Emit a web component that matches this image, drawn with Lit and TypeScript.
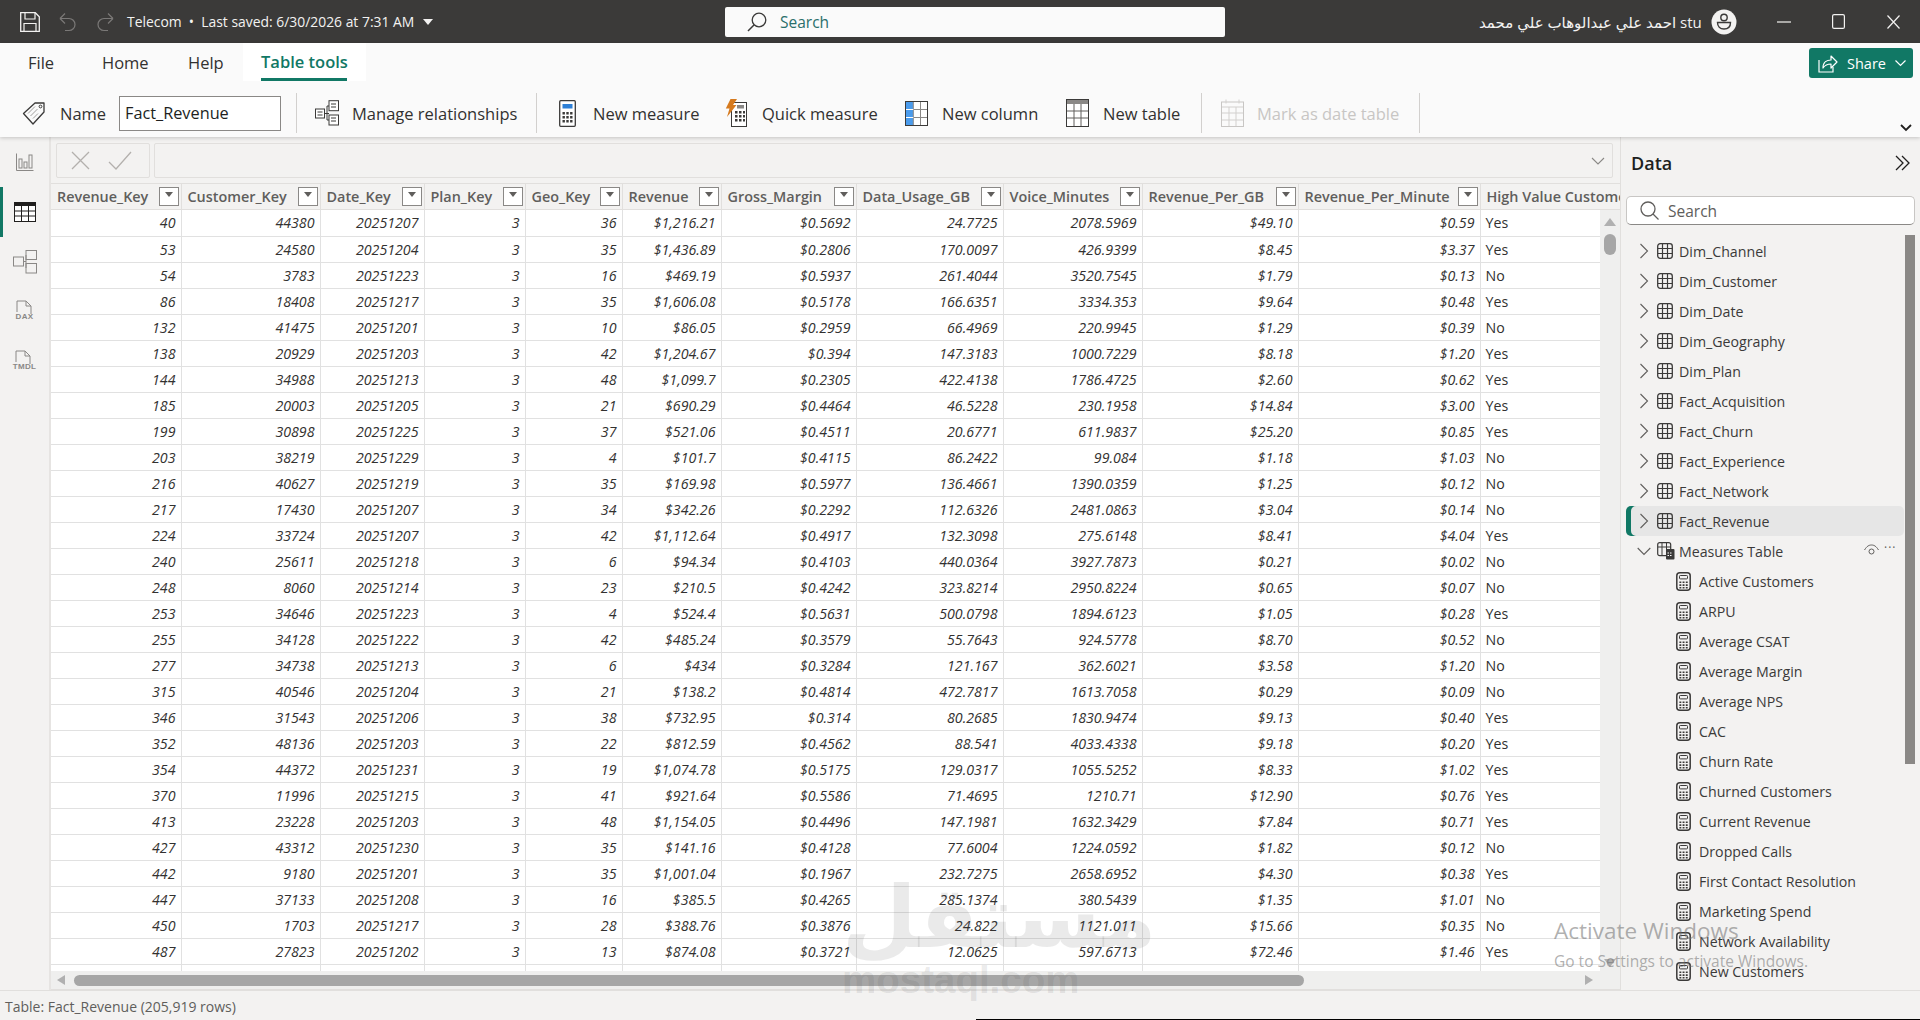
import { LitElement, html, css, svg } from 'lit'
import { customElement } from 'lit/decorators.js'

const COLS = [130, 139, 104, 101, 97, 99, 135, 147, 139, 156, 182, 140]
const HEADERS = ['Revenue_Key', 'Customer_Key', 'Date_Key', 'Plan_Key', 'Geo_Key', 'Revenue', 'Gross_Margin', 'Data_Usage_GB', 'Voice_Minutes', 'Revenue_Per_GB', 'Revenue_Per_Minute', 'High Value Customer']

const ROWS = `40 44380 20251207 3 36 $1,216.21 $0.5692 24.7725 2078.5969 $49.10 $0.59 Yes
53 24580 20251204 3 35 $1,436.89 $0.2806 170.0097 426.9399 $8.45 $3.37 Yes
54 3783 20251223 3 16 $469.19 $0.5937 261.4044 3520.7545 $1.79 $0.13 No
86 18408 20251217 3 35 $1,606.08 $0.5178 166.6351 3334.353 $9.64 $0.48 Yes
132 41475 20251201 3 10 $86.05 $0.2959 66.4969 220.9945 $1.29 $0.39 No
138 20929 20251203 3 42 $1,204.67 $0.394 147.3183 1000.7229 $8.18 $1.20 Yes
144 34988 20251213 3 48 $1,099.7 $0.2305 422.4138 1786.4725 $2.60 $0.62 Yes
185 20003 20251205 3 21 $690.29 $0.4464 46.5228 230.1958 $14.84 $3.00 Yes
199 30898 20251225 3 37 $521.06 $0.4511 20.6771 611.9837 $25.20 $0.85 Yes
203 38219 20251229 3 4 $101.7 $0.4115 86.2422 99.084 $1.18 $1.03 No
216 40627 20251219 3 35 $169.98 $0.5977 136.4661 1390.0359 $1.25 $0.12 No
217 17430 20251207 3 34 $342.26 $0.2292 112.6326 2481.0863 $3.04 $0.14 No
224 33724 20251207 3 42 $1,112.64 $0.4917 132.3098 275.6148 $8.41 $4.04 Yes
240 25611 20251218 3 6 $94.34 $0.4103 440.0364 3927.7873 $0.21 $0.02 No
248 8060 20251214 3 23 $210.5 $0.4242 323.8214 2950.8224 $0.65 $0.07 No
253 34646 20251223 3 4 $524.4 $0.5631 500.0798 1894.6123 $1.05 $0.28 Yes
255 34128 20251222 3 42 $485.24 $0.3579 55.7643 924.5778 $8.70 $0.52 No
277 34738 20251213 3 6 $434 $0.3284 121.167 362.6021 $3.58 $1.20 No
315 40546 20251204 3 21 $138.2 $0.4814 472.7817 1613.7058 $0.29 $0.09 No
346 31543 20251206 3 38 $732.95 $0.314 80.2685 1830.9474 $9.13 $0.40 Yes
352 48136 20251203 3 22 $812.59 $0.4562 88.541 4033.4338 $9.18 $0.20 Yes
354 44372 20251231 3 19 $1,074.78 $0.5175 129.0317 1055.5252 $8.33 $1.02 Yes
370 11996 20251215 3 41 $921.64 $0.5586 71.4695 1210.71 $12.90 $0.76 Yes
413 23228 20251203 3 48 $1,154.05 $0.4496 147.1981 1632.3429 $7.84 $0.71 Yes
427 43312 20251230 3 35 $141.16 $0.4128 77.6004 1224.0592 $1.82 $0.12 No
442 9180 20251201 3 35 $1,001.04 $0.1967 232.7275 2658.6952 $4.30 $0.38 Yes
447 37133 20251208 3 16 $385.5 $0.4265 285.1374 380.5439 $1.35 $1.01 No
450 1703 20251217 3 28 $388.76 $0.3876 24.822 1121.011 $15.66 $0.35 No
487 27823 20251202 3 13 $874.08 $0.3721 12.0625 597.6713 $72.46 $1.46 Yes`.split('\n').map(r => r.split(' '))

const TABLES = ['Dim_Channel', 'Dim_Customer', 'Dim_Date', 'Dim_Geography', 'Dim_Plan', 'Fact_Acquisition', 'Fact_Churn', 'Fact_Experience', 'Fact_Network', 'Fact_Revenue']
const MEASURES = ['Active Customers', 'ARPU', 'Average CSAT', 'Average Margin', 'Average NPS', 'CAC', 'Churn Rate', 'Churned Customers', 'Current Revenue', 'Dropped Calls', 'First Contact Resolution', 'Marketing Spend', 'Network Availability', 'New Customers']

const icon = (w: number, h: number, body: unknown) => html`<svg width=${w} height=${h} viewBox="0 0 ${w} ${h}" fill="none">${body}</svg>`

const gridIcon = () => icon(16, 16, svg`<rect x=".7" y=".7" width="14.6" height="14.6" rx="2.5" stroke="#3b3a39" stroke-width="1.3"/><path d="M5.5 1v14M10.5 1v14M1 5.5h14M1 10.5h14" stroke="#3b3a39" stroke-width="1.2"/>`)
const calcIcon = () => icon(15, 19, svg`<rect x=".8" y=".8" width="13.4" height="17.4" rx="3" stroke="#3b3a39" stroke-width="1.5"/><rect x="3.5" y="3.5" width="8" height="3.4" rx=".8" stroke="#3b3a39"/><path d="M3.4 9.500h1.900v1.600H3.400zM6.600 9.500h1.900v1.600H6.600zM9.800 9.500h1.900v1.600H9.800zM3.400 12.300h1.900v1.600H3.400zM6.600 12.300h1.900v1.600H6.600zM9.800 12.300h1.900v1.600H9.800zM3.400 15h1.900v1.400H3.400zM6.600 15h1.900v1.400H6.600zM9.800 15h1.900v1.400H9.800z" fill="#3b3a39"/>`)
const chevRight = () => icon(10, 16, svg`<path d="M1.5 1l7 7-7 7" stroke="#605e5c" stroke-width="1.1"/>`)
const chevDown = () => icon(14, 9, svg`<path d="M.7 1l6.300 6.500L13.300 1" stroke="#605e5c" stroke-width="1.1"/>`)

const tagIcon = () => icon(24, 24, svg`<path d="M1.5 12.5L13 2h9v9L11 23z" stroke="#3b3a39" stroke-width="1.3" stroke-linejoin="round"/><circle cx="18.5" cy="5.5" r="1.4" stroke="#3b3a39"/><path d="M6 12.5l7-7M8.5 15l7-7M11 17.5l5-5" stroke="#a19f9d"/>`)
const relIcon = () => icon(24, 26, svg`<rect x=".5" y="9" width="9" height="9" fill="#fff" stroke="#3b3a39"/><rect x="14" y=".7" width="9.5" height="10" fill="#fff" stroke="#3b3a39"/><rect x="14" y="15" width="9.5" height="10" fill="#fff" stroke="#3b3a39"/><path d="M9.5 13.5H14M12 6v14M12 6h2M12 20h2M2.5 12h5M2.5 15h5M16 4h5M16 7h5M16 18h5M16 21h5" stroke="#3b3a39"/>`)
const measureIcon = () => icon(17, 27, svg`<rect x=".7" y=".7" width="15.6" height="25.6" fill="#fff" stroke="#3b3a39" stroke-width="1.3" rx="1"/><rect x="3.5" y="4" width="10" height="4.5" fill="#2d7fd6"/><path d="M3.5 12h2.4v2.4H3.5zM7.3 12h2.4v2.4H7.3zM11.1 12h2.4v2.4h-2.4zM3.5 16h2.4v2.4H3.5zM7.3 16h2.4v2.4H7.3zM11.1 16h2.4v2.4h-2.4zM3.5 20h2.4v2.4H3.5zM7.3 20h2.4v2.4H7.3zM11.1 20h2.4v2.4h-2.4z" fill="#3b3a39"/>`)
const quickIcon = () => icon(22, 28, svg`<rect x="6.5" y="3.5" width="15" height="24" fill="#fff" stroke="#3b3a39"/><rect x="12" y="6" width="7" height="3.5" fill="#8a8886"/><path d="M10 12h2.5v2.5H10zM14 12h2.5v2.5H14zM18 12h2v2.5h-2zM10 16h2.5v2.5H10zM14 16h2.5v2.5H14zM18 16h2v2.5h-2zM10 20h2.5v2.5H10zM14 20h2.5v2.5H14zM18 20h2v2.5h-2z" fill="#3b3a39"/><path d="M5.5 0h6.5L8 6h3.5L2 18l2.5-8.5H.8z" fill="#d67a1e"/>`)
const columnIcon = () => icon(23, 25, svg`<rect x=".5" y=".5" width="22" height="24" fill="#fff" stroke="#3b3a39"/><rect x="1" y="1" width="7.3" height="23" fill="#4a9bec"/><path d="M8.3 1v23M15.5 1v23M1 8.5h21M1 16.5h21" stroke="#8a8886"/><path d="M1 8.5h7.3M1 16.5h7.3" stroke="#fff"/>`)
const tableIcon = () => icon(23, 28, svg`<rect x=".5" y=".5" width="22" height="27" fill="#fff" stroke="#3b3a39"/><rect x="1" y="1" width="21" height="4" fill="#8a8886"/><path d="M8 5v22M15 5v22M1 12h21M1 19h21" stroke="#605e5c"/>`)
const dateIcon = () => icon(23, 28, svg`<rect x=".5" y="3" width="22" height="24.5" fill="#fafafa" stroke="#c8c6c4"/><path d="M1 8h21M8 8v19M15 8v19M1 14h21M1 21h21M5 .5v4M18 .5v4" stroke="#d2d0ce"/>`)

const reportIcon = () => icon(18, 18, svg`<path d="M.5.5v17h17" stroke="#8a8886"/><rect x="3" y="6" width="3" height="9" stroke="#8a8886"/><rect x="8" y="9" width="3" height="6" stroke="#8a8886"/><rect x="13" y="2" width="3" height="13" stroke="#8a8886"/>`)
const railTable = () => icon(22, 20, svg`<rect x=".5" y=".5" width="21" height="19" fill="#fff" stroke="#201f1e"/><rect x="1" y="1" width="20" height="3" fill="#201f1e"/><path d="M7.5 4v15M14.5 4v15M1 9h20M1 14h20" stroke="#201f1e"/>`)
const railModel = () => icon(24, 24, svg`<g stroke="#8a8886" fill="none"><rect x=".5" y="7" width="10" height="9"/><rect x="13" y=".5" width="10.5" height="9"/><rect x="13" y="13.5" width="10.5" height="9.5"/><path d="M10.5 11.5H13M13 5v13"/></g>`)
const railFile = (label: string) => html`<div class="file-ico">${icon(22, 20, svg`<path d="M3 12V1h9l5 5v8" stroke="#8a8886"/><path d="M12 1v5h5" stroke="#8a8886"/>`)}<span>${label}</span></div>`

const saveIcon = () => icon(20, 20, svg`<path d="M.7.7h14.6l4 4v14.6H.7z" stroke="#f3f2f1" stroke-width="1.3"/><path d="M5 1v6h10V1M4 19v-7.500h12V19" stroke="#f3f2f1" stroke-width="1.2"/>`)
const undoIcon = () => icon(17, 20, svg`<path d="M1 6.500h9a6 6 0 0 1 0 12H6M1 6.500L6 1.500M1 6.500l5 5" stroke="#7a7877" stroke-width="1.2"/>`)
const redoIcon = () => icon(17, 20, svg`<path d="M16 6.500H7a6 6 0 0 0 0 12h4M16 6.500l-5-5M16 6.500l-5 5" stroke="#7a7877" stroke-width="1.2"/>`)
const topGlass = () => icon(20, 20, svg`<circle cx="12" cy="8" r="6.800" stroke="#3b3a39" stroke-width="1.300"/><path d="M7.200 12.800L1 19" stroke="#3b3a39" stroke-width="1.500"/>`)
const panelGlass = () => icon(19, 19, svg`<circle cx="8" cy="8" r="7" stroke="#605e5c" stroke-width="1.3"/><path d="M13 13l5.500 5.500" stroke="#605e5c" stroke-width="1.3"/>`)

@customElement('app-root')
export class AppRoot extends LitElement {
  static styles = css`
    :host {
      display: flex;
      flex-direction: column;
      position: relative;
      width: 1920px;
      height: 1020px;
      overflow: hidden;
      background: #f3f2f1;
      font-family: 'Open Sans', 'DejaVu Sans', sans-serif;
      color: #323130;
    }
    svg { display: block; flex: none; }

    /* title bar */
    .title {
      height: 43px;
      flex: none;
      background: #3b3a39;
      color: #f3f2f1;
      display: grid;
      grid-template-columns: 725px 500px 1fr;
      align-items: center;
    }
    .title-left { display: flex; align-items: center; padding-left: 20px; }
    .title-left .undo { margin-left: 19px; }
    .title-left .redo { margin-left: 21px; }
    .doc { margin-left: 13px; font-size: 13.9px; white-space: nowrap; }
    .caret { margin-left: 9px; width: 0; height: 0; border: 5.5px solid transparent; border-top: 6px solid #f3f2f1; border-bottom: 0; }
    .search {
      height: 30px;
      background: #fafafa;
      border-radius: 2px;
      display: flex;
      align-items: center;
      gap: 13px;
      padding-left: 22px;
      font-size: 15.5px;
      color: #2a6f6b;
    }
    .title-right { display: flex; align-items: center; padding-left: 254px; }
    .user { width: 219px; font-size: 15px; white-space: nowrap; text-align: right; }
    .avatar { margin-left: 13px; }
    .win-min { margin-left: 40px; }
    .win-max { margin-left: 41px; }
    .win-close { margin-left: 42px; }

    /* ribbon */
    .ribbon {
      height: 94px;
      flex: none;
      background: #fafafa;
      position: relative;
      z-index: 1;
      box-shadow: 0 1px 4px rgba(0, 0, 0, 0.2);
    }
    .tabs { height: 38px; display: grid; grid-template-columns: 74px 86px 55px 123px; padding-left: 28px; font-size: 16.5px; align-items: center; }
    .tab-on {
      height: 38px;
      background: #fff;
      box-sizing: border-box;
      padding-left: 18px;
      line-height: 38px;
      color: #117865;
      font-weight: 600;
      white-space: nowrap;
      position: relative;
    }
    .tab-on::after { content: ''; position: absolute; left: 18px; top: 35px; width: 86px; height: 3px; background: #117865; }
    .share {
      position: absolute;
      left: 1809px;
      top: 5px;
      width: 104px;
      height: 30px;
      box-sizing: border-box;
      background: #117865;
      border-radius: 3px;
      color: #fff;
      display: flex;
      align-items: center;
      padding-left: 9px;
      gap: 9px;
      font-size: 14.5px;
    }
    .ribbon-caret { position: absolute; left: 1900px; top: 81px; }
    .cmds {
      display: grid;
      grid-template-columns: 38px 59px 162px 15px 1px 18px 37px 184px 1px 22px 34px 132px 37px 143px 37px 124px 37px 98px 1px 19px 36px 162px 1px;
      align-items: center;
      height: 40px;
      margin-top: 12px;
      padding-left: 22px;
      font-size: 16.5px;
      white-space: nowrap;
    }
    .sep { background: #d2d0ce; height: 40px; width: 1px; }
    .nameinput {
      height: 35px;
      box-sizing: border-box;
      border: 1px solid #8a8886;
      background: #fff;
      padding-left: 5px;
      line-height: 32px;
      font-size: 16.3px;
      color: #201f1e;
    }
    .off { color: #c8c6c4; }

    /* body */
    .main { flex: 1; min-height: 0; display: grid; grid-template-columns: 51px 1569px 300px; grid-template-rows: minmax(0, 1fr); }
    .rail { border-right: 2px solid #e6e4e2; box-sizing: border-box; }
    .rail-item { height: 50px; display: flex; align-items: center; justify-content: center; }
    .rail-on { box-shadow: inset 3px 0 0 #117865; }
    .file-ico { display: flex; flex-direction: column; align-items: center; margin-top: -4px; }
    .file-ico span { font-size: 8px; font-weight: 700; color: #8a8886; margin-top: -8px; font-family: 'Liberation Sans', sans-serif; letter-spacing: 0.3px; }

    .center { min-width: 0; display: flex; flex-direction: column; }
    .formula { display: flex; gap: 4px; height: 35px; margin: 6px 7px 5px 5px; flex: none; }
    .fx-btn { width: 94px; box-sizing: border-box; border: 1px solid #e1dfdd; border-radius: 2px; display: flex; align-items: center; gap: 18px; padding-left: 14px; }
    .fx-input { flex: 1; box-sizing: border-box; border: 1px solid #e1dfdd; border-radius: 2px; display: flex; align-items: center; justify-content: flex-end; padding-right: 7px; }

    .grid { flex: 1; min-height: 0; display: flex; flex-direction: column; overflow: hidden; }
    table { border-collapse: collapse; table-layout: fixed; width: 1569px; }
    col.last { width: 220px; }
    th {
      height: 26px;
      padding: 0 0 0 6px;
      box-sizing: border-box;
      text-align: left;
      font-size: 14.4px;
      font-weight: 600;
      color: #605e5c;
      background: #f3f2f1;
      border: 1px solid #e1dfdd;
      border-left: 0;
      white-space: nowrap;
      overflow: hidden;
    }
    .th-in { display: flex; align-items: center; justify-content: space-between; padding-right: 2px; }
    .filter { width: 20px; height: 19px; box-sizing: border-box; background: #fff; border: 1px solid #8a8886; position: relative; flex: none; }
    .filter::after { content: ''; position: absolute; left: 5px; top: 4px; border: 4px solid transparent; border-top: 5px solid #605e5c; border-bottom: 0; }
    .grid-body { flex: 1; min-height: 0; display: flex; }
    .rows { width: 1549px; flex: none; overflow: hidden; background: #fff; }
    td {
      height: 26px;
      padding: 0 5px;
      box-sizing: border-box;
      text-align: right;
      font-size: 14.2px;
      font-style: italic;
      color: #323130;
      background: #fff;
      border-right: 1px solid #e1e1e1;
      border-bottom: 1px solid #e1e1e1;
      white-space: nowrap;
    }
    td.txt { text-align: left; font-style: normal; border-right: 0; }
    .vscroll { width: 20px; flex: none; position: relative; background: #efefee; }
    .thumb-v { position: absolute; left: 4px; top: 24px; width: 12px; height: 21px; border-radius: 6px; background: #a6a6a6; }
    .up { position: absolute; left: 4px; top: 8px; border: 6px solid transparent; border-bottom: 8px solid #b0b0b0; border-top: 0; }
    .down { position: absolute; left: 4px; bottom: 4px; border: 6px solid transparent; border-top: 8px solid #b0b0b0; border-bottom: 0; }
    .hscroll { height: 19px; flex: none; background: #efefee; display: flex; align-items: center; padding-left: 6px; border-bottom: 1px solid #e1dfdd; box-sizing: border-box; }
    .left { width: 0; height: 0; border: 5.5px solid transparent; border-right: 8px solid #b0b0b0; border-left: 0; }
    .thumb-h { margin-left: 9px; width: 1230px; height: 11px; border-radius: 6px; background: #a6a6a6; }
    .right { margin-left: 281px; width: 0; height: 0; border: 5.5px solid transparent; border-left: 8px solid #b0b0b0; border-right: 0; }

    /* data pane */
    .pane { border-left: 1px solid #e1dfdd; box-sizing: border-box; position: relative; overflow: hidden; }
    .pane-head { height: 52px; display: flex; align-items: center; justify-content: space-between; padding: 0 9px 0 10px; box-sizing: border-box; }
    .pane-head b { font-size: 18px; font-weight: 600; color: #201f1e; }
    .pane-search {
      margin: 7px 5px 0 5px;
      height: 29px;
      box-sizing: border-box;
      background: #fff;
      border: 1px solid #c8c6c4;
      border-bottom: 1px solid #8a8886;
      border-radius: 5px;
      display: flex;
      align-items: center;
      gap: 9px;
      padding-left: 13px;
      font-size: 15.5px;
      color: #605e5c;
    }
    .tree { margin-top: 11px; font-size: 14.2px; color: #3b3a39; }
    .node { height: 30px; display: flex; align-items: center; padding-left: 18px; position: relative; white-space: nowrap; }
    .node .lab { margin-left: 6px; }
    .node .ico { margin-left: 8px; }
    .sel { background: #e6e6e6; margin: 0 16px 0 5px; padding-left: 13px; border-radius: 5px; box-shadow: inset 5px 0 0 #117865; }
    .open { padding-left: 16px; }
    .open .ico { margin-left: 6px; }
    .open .lab { margin-left: 4px; }
    .leaf { padding-left: 55px; }
    .leaf .lab { margin-left: 8px; }
    .hover-ico { position: absolute; left: 243px; top: 8px; display: flex; align-items: center; gap: 5px; }
    .dots { font-size: 12px; letter-spacing: 1px; line-height: 12px; margin-top: -5px; color: #605e5c; }
    .pane-scroll { position: absolute; left: 284px; top: 98px; width: 10px; height: 529px; background: #8a8886; }

    /* status */
    .status { height: 29px; flex: none; box-sizing: border-box; border-top: 1px solid #e1dfdd; padding-left: 5px; font-size: 14px; line-height: 31px; color: #605e5c; }
    .edge { height: 1px; margin-left: 976px; background: #000; flex: none; }

    /* overlays */
    .wm { position: absolute; left: 842px; top: 874px; width: 232px; text-align: center; color: rgba(60, 60, 60, 0.11); font-weight: 700; pointer-events: none; font-family: 'DejaVu Sans', sans-serif; line-height: 1; }
    .wm-ar { font-size: 86px; height: 87px; }
    .wm-en { font-size: 38.5px; font-family: 'Liberation Sans', sans-serif; }
    .activate { position: absolute; left: 1554px; top: 915px; color: rgba(110, 110, 110, 0.55); pointer-events: none; white-space: nowrap; }
    .activate div:first-child { font-size: 22.5px; line-height: 32px; }
    .activate div:last-child { font-size: 15.5px; line-height: 28px; }
  `

  render() {
    return html`
      <div class="title">
        <div class="title-left">
          ${saveIcon()}
          <span class="undo">${undoIcon()}</span>
          <span class="redo">${redoIcon()}</span>
          <span class="doc">Telecom &nbsp;•&nbsp; Last saved: 6/30/2026 at 7:31 AM</span>
          <span class="caret"></span>
        </div>
        <div class="search">${topGlass()}<span>Search</span></div>
        <div class="title-right">
          <span class="user">احمد علي عبدالوهاب علي محمد stu</span>
          <span class="avatar">${icon(26, 26, svg`<circle cx="13" cy="13" r="12.500" fill="#f3f2f1"/><circle cx="13" cy="8.500" r="3.200" stroke="#3b3a39" stroke-width="1.400"/><path d="M6.500 13.500h13c0 4-2.500 6.500-6.500 6.500s-6.500-2.500-6.500-6.500z" stroke="#3b3a39" stroke-width="1.400"/>`)}</span>
          <span class="win-min">${icon(14, 2, svg`<path d="M0 1h14" stroke="#f3f2f1" stroke-width="1.200"/>`)}</span>
          <span class="win-max">${icon(13, 15, svg`<rect x=".6" y=".6" width="11.800" height="13.800" rx="1.500" stroke="#f3f2f1" stroke-width="1.200"/>`)}</span>
          <span class="win-close">${icon(13, 14, svg`<path d="M.5.500l12 13M12.500.500l-12 13" stroke="#f3f2f1" stroke-width="1.200"/>`)}</span>
        </div>
      </div>

      <div class="ribbon">
        <div class="tabs">
          <span>File</span><span>Home</span><span>Help</span>
          <span class="tab-on">Table tools</span>
        </div>
        <div class="share">
          ${icon(20, 20, svg`<path d="M1 7v12h14v-5" stroke="#fff" stroke-width="1.200"/><path d="M5 15c0-6 4-8 8-8V3l6 6-6 6v-4c-3 0-6 1-8 4z" stroke="#fff" stroke-width="1.200" stroke-linejoin="round"/>`)}
          <span>Share</span>
          ${icon(11, 7, svg`<path d="M.5.500l5 5 5-5" stroke="#fff" stroke-width="1.200"/>`)}
        </div>
        <div class="ribbon-caret">${icon(12, 8, svg`<path d="M1 1l5 5 5-5" stroke="#201f1e" stroke-width="1.800"/>`)}</div>
        <div class="cmds">
          ${tagIcon()}<span>Name</span><div class="nameinput">Fact_Revenue</div><span></span><i class="sep"></i>
          <span></span>${relIcon()}<span>Manage relationships</span><i class="sep"></i>
          <span></span>${measureIcon()}<span>New measure</span>
          ${quickIcon()}<span>Quick measure</span>
          ${columnIcon()}<span>New column</span>
          ${tableIcon()}<span>New table</span>
          <i class="sep"></i><span></span>
          ${dateIcon()}<span class="off">Mark as date table</span><i class="sep"></i>
        </div>
      </div>

      <div class="main">
        <div class="rail">
          <div class="rail-item">${reportIcon()}</div>
          <div class="rail-item rail-on">${railTable()}</div>
          <div class="rail-item">${railModel()}</div>
          <div class="rail-item">${railFile('DAX')}</div>
          <div class="rail-item">${railFile('TMDL')}</div>
        </div>

        <div class="center">
          <div class="formula">
            <div class="fx-btn">
              ${icon(19, 19, svg`<path d="M1 1l17 17M18 1L1 18" stroke="#b3b0ad" stroke-width="1.300"/>`)}
              ${icon(24, 19, svg`<path d="M1 11l7 7L23 1" stroke="#b3b0ad" stroke-width="1.300"/>`)}
            </div>
            <div class="fx-input">${icon(14, 8, svg`<path d="M1 1l6 6 6-6" stroke="#8a8886" stroke-width="1.100"/>`)}</div>
          </div>
          <div class="grid">
            <table>
              <colgroup>${COLS.slice(0, 11).map(w => html`<col style="width:${w}px" />`)}<col class="last" /></colgroup>
              <tr>${HEADERS.map((h, i) => html`<th><div class="th-in"><span>${h}</span>${i < 11 ? html`<i class="filter"></i>` : ''}</div></th>`)}</tr>
            </table>
            <div class="grid-body">
              <div class="rows">
                <table style="width:1549px">
                  <colgroup>${COLS.map((w, i) => html`<col style="width:${i === 11 ? 120 : w}px" />`)}</colgroup>
                  ${ROWS.map(r => html`<tr>${r.map((c, i) => html`<td class=${i === 11 ? 'txt' : ''}>${c}</td>`)}</tr>`)}
                  <tr>${COLS.map((_, i) => html`<td class=${i === 11 ? 'txt' : ''}></td>`)}</tr>
                </table>
              </div>
              <div class="vscroll"><i class="up"></i><i class="thumb-v"></i><i class="down"></i></div>
            </div>
            <div class="hscroll"><i class="left"></i><i class="thumb-h"></i><i class="right"></i></div>
          </div>
        </div>

        <div class="pane">
          <div class="pane-head"><b>Data</b>${icon(16, 16, svg`<path d="M1 1l7 7-7 7M7 1l7 7-7 7" stroke="#201f1e" stroke-width="1.300"/>`)}</div>
          <div class="pane-search">${panelGlass()}<span>Search</span></div>
          <div class="tree">
            ${TABLES.map(t => html`<div class="node ${t === 'Fact_Revenue' ? 'sel' : ''}">${chevRight()}<span class="ico">${gridIcon()}</span><span class="lab">${t}</span></div>`)}
            <div class="node open">
              ${chevDown()}
              <span class="ico">${icon(18, 18, svg`<rect x=".7" y=".7" width="13" height="13" rx="2" stroke="#3b3a39" stroke-width="1.200"/><path d="M1 5h13M5 1v13M9.500 1v13" stroke="#3b3a39"/><rect x="9" y="7" width="8.500" height="10.500" rx="1" fill="#3b3a39"/><path d="M10.500 11h1.500M13 11h1.500M10.500 13.500h1.500M13 13.500h1.500" stroke="#fff"/>`)}</span>
              <span class="lab">Measures Table</span>
              <span class="hover-ico">
                ${icon(15, 12, svg`<path d="M.5 6C3 2 5 1 7.500 1s4.500 1 7 5" stroke="#605e5c"/><circle cx="7.500" cy="7.500" r="2.500" stroke="#605e5c"/>`)}
                <span class="dots">···</span>
              </span>
            </div>
            ${MEASURES.map(m => html`<div class="node leaf">${calcIcon()}<span class="lab">${m}</span></div>`)}
          </div>
          <div class="pane-scroll"></div>
        </div>
      </div>

      <div class="status">Table: Fact_Revenue (205,919 rows)</div>
      <div class="edge"></div>

      <div class="wm"><div class="wm-ar">مستقل</div><div class="wm-en">mostaql.com</div></div>
      <div class="activate"><div>Activate Windows</div><div>Go to Settings to activate Windows.</div></div>
    `
  }
}
